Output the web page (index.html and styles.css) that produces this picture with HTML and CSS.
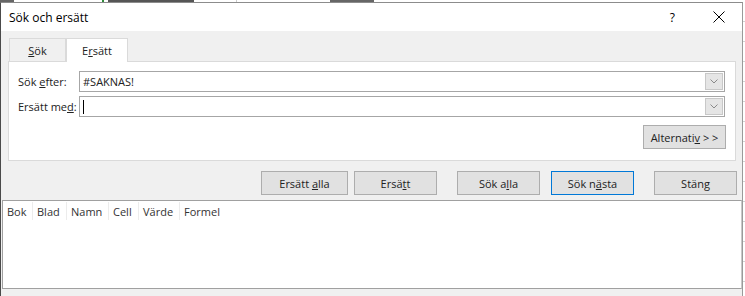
FILE: index.html
```html
<!DOCTYPE html>
<html lang="sv">
<head>
    <meta charset="UTF-8">
    <meta name="viewport" content="width=device-width, initial-scale=1.0">
    <title>Sök och ersätt</title>
    <link rel="stylesheet" href="styles.css">
</head>
<body>
    <div class="screen">
        <div class="sheet-top"></div>
        <div class="stage">
            <div class="dialog">
                <div class="titlebar">
                    <span class="title">Sök och ersätt</span>
                    <div class="title-actions">
                        <span class="help">?</span>
                        <svg class="close" width="12" height="12" viewBox="0 0 12 12">
                            <path d="M0.5 0.5 L11.5 11.5 M11.5 0.5 L0.5 11.5" stroke="#000" stroke-width="1" fill="none"/>
                        </svg>
                    </div>
                </div>

                <div class="body">
                    <div class="tabs">
                        <div class="tab"><u>S</u>ök</div>
                        <div class="tab active">E<u>r</u>sätt</div>
                    </div>
                    <div class="panel">
                        <div class="field-row">
                            <label class="field-label">Sök <u>e</u>fter:</label>
                            <div class="combo">
                                <span class="combo-value">#SAKNAS!</span>
                                <span class="combo-btn">
                                    <svg width="8" height="5" viewBox="0 0 8 5"><path d="M0.5 0.5 L4 4 L7.5 0.5" stroke="#8a8a8a" fill="none"/></svg>
                                </span>
                            </div>
                        </div>
                        <div class="field-row">
                            <label class="field-label">Ersätt me<u>d</u>:</label>
                            <div class="combo">
                                <span class="combo-value"><span class="caret"></span></span>
                                <span class="combo-btn">
                                    <svg width="8" height="5" viewBox="0 0 8 5"><path d="M0.5 0.5 L4 4 L7.5 0.5" stroke="#8a8a8a" fill="none"/></svg>
                                </span>
                            </div>
                        </div>
                        <div class="panel-actions">
                            <button class="btn">Alternati<u>v</u> &gt; &gt;</button>
                        </div>
                    </div>

                    <div class="actions">
                        <button class="btn btn-wide">Ersätt <u>a</u>lla</button>
                        <button class="btn">Ersä<u>t</u>t</button>
                        <button class="btn spaced">Sök a<u>l</u>la</button>
                        <button class="btn btn-default">Sök n<u>ä</u>sta</button>
                        <button class="btn spaced">Stäng</button>
                    </div>
                </div>

                <div class="results">
                    <div class="results-head">
                        <span class="col col-bok">Bok</span>
                        <span class="col col-blad">Blad</span>
                        <span class="col col-namn">Namn</span>
                        <span class="col col-cell">Cell</span>
                        <span class="col col-varde">Värde</span>
                        <span class="col col-formel">Formel</span>
                    </div>
                </div>
                <div class="statusbar"></div>
            </div>
            <div class="sheet-right"></div>
        </div>
    </div>
</body>
</html>
```

FILE: styles.css
```css
body {
    margin: 0;
    background-color: #fff;
    font-family: "Open Sans", "Noto Sans", sans-serif;
    font-size: 11px;
    color: #000;
    overflow: hidden;
}

.screen {
    display: flex;
    flex-direction: column;
    width: 745px;
    height: 296px;
}

/* bit of the spreadsheet behind the dialog */
.sheet-top {
    height: 2px;
    background: linear-gradient(to right,
        #666 0, #666 14px, #fff 14px, #fff 102px,
        #2e8b3a 102px, #2e8b3a 104px, #fff 104px, #fff 108px,
        #555 108px, #555 194px, #fff 194px, #fff 236px,
        #ccc 236px, #ccc 237px, #fff 237px, #fff 330px,
        #666 330px, #666 374px, #fff 374px);
}

.stage {
    display: flex;
    flex: 1;
}

.sheet-right {
    flex: 1;
    background: repeating-linear-gradient(to bottom, #fff 0, #fff 19px, #d4d4d4 19px, #d4d4d4 20px);
}

.dialog {
    width: 741px;
    display: flex;
    flex-direction: column;
    border-left: 1px solid #4a4a4a;
    border-top: 1px solid #8c8c8c;
    border-right: 1px solid #9a9a9a;
    background-color: #f0f0f0;
}

.titlebar {
    height: 28px;
    display: flex;
    align-items: center;
    justify-content: space-between;
    background-color: #fff;
    padding: 0 17px 0 8px;
}

.title {
    font-size: 12px;
    padding-top: 1px;
}

.title-actions {
    display: flex;
    align-items: center;
    gap: 38px;
}

.help {
    font-size: 12px;
    padding-top: 1px;
}

.close {
    display: block;
}

.body {
    padding: 7px 5px 5px 7px;
}

.tabs {
    display: flex;
    height: 24px;
    padding-left: 1px;
    margin-bottom: -1px;
    position: relative;
}

.tab {
    display: flex;
    align-items: center;
    justify-content: center;
    width: 57px;
    border: 1px solid #dadada;
    border-bottom: none;
    box-sizing: border-box;
    color: #222;
}

.tab.active {
    width: 62px;
    background-color: #fff;
    border-color: #dadada;
    z-index: 1;
}

.panel {
    width: 728px;
    height: 100px;
    box-sizing: border-box;
    background-color: #fff;
    border: 1px solid #dadada;
    padding: 9px 9px 0 9px;
}

.field-row {
    display: flex;
    align-items: center;
    margin-bottom: 4px;
}

.field-label {
    width: 61px;
    color: #222;
}

.combo {
    flex: 1;
    display: flex;
    height: 21px;
    box-sizing: border-box;
    border: 1px solid #a6a6a6;
    margin-right: 1px;
}

.combo-value {
    flex: 1;
    display: flex;
    align-items: center;
    padding-left: 3px;
    color: #222;
}

.caret {
    width: 1px;
    height: 14px;
    background-color: #000;
}

.combo-btn {
    width: 16px;
    margin: 1px;
    display: flex;
    align-items: center;
    justify-content: center;
    background-color: #e5e5e5;
    border: 1px solid #c8c8c8;
}

.panel-actions {
    display: flex;
    justify-content: flex-end;
    margin-top: 8px;
}

.btn {
    width: 83px;
    height: 24px;
    box-sizing: border-box;
    background-color: #e1e1e1;
    border: 1px solid #adadad;
    font: inherit;
    color: #222;
    padding: 0;
}

.btn-wide {
    width: 87px;
}

.btn-default {
    border-color: #0078d7;
}

.actions {
    display: flex;
    justify-content: flex-end;
    gap: 6px;
    margin-top: 10px;
}

.actions .spaced {
    margin-left: 14px;
}

.actions .btn-default {
    margin-left: 5px;
}

.results {
    flex: 1;
    margin: 0 0 0 1px;
    background-color: #fff;
    border: 1px solid #a0a0a0;
    border-right-color: #c8c8c8;
}

.results-head {
    display: flex;
    height: 18px;
    margin-top: 1px;
}

.col {
    display: flex;
    align-items: center;
    padding-left: 4px;
    box-sizing: border-box;
    border-right: 1px solid #ececec;
    color: #333;
}

.col-bok { width: 30px; }
.col-blad { width: 34px; }
.col-namn { width: 42px; }
.col-cell { width: 30px; }
.col-varde { width: 41px; }
.col-formel { border-right: none; }

.statusbar {
    height: 7px;
}
```
